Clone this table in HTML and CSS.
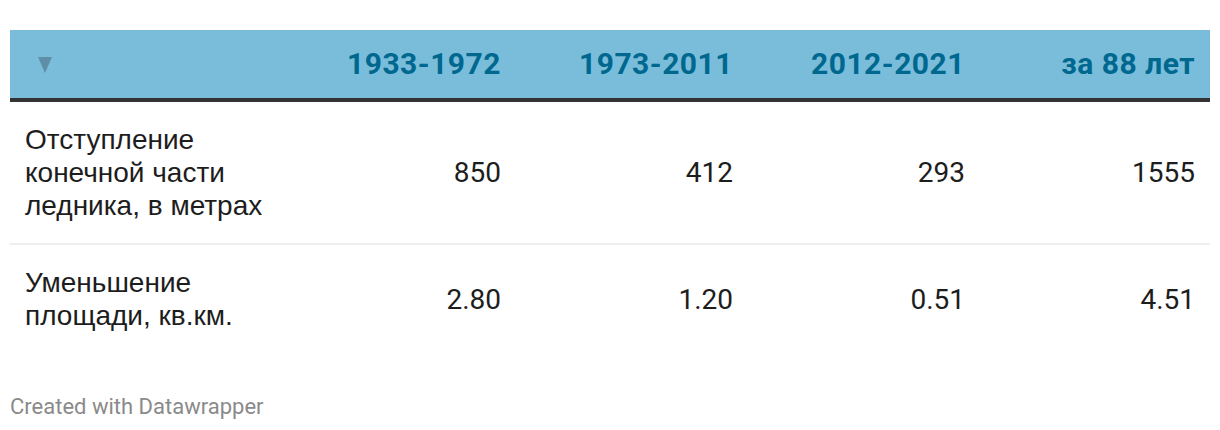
FILE: index.html
```html
<!DOCTYPE html>
<html lang="ru">
<head>
    <meta charset="UTF-8">
    <meta name="viewport" content="width=device-width, initial-scale=1.0">
    <title>Отступление ледника</title>
    <link rel="stylesheet" href="styles.css">
</head>
<body>
    <div class="chart">
        <table class="data-table">
            <thead>
                <tr>
                    <th class="label-col">
                        <svg class="sort-icon" width="14" height="16" viewBox="0 0 14 16">
                            <polygon points="0,0 14,0 7,16" fill="#5e8fa6"/>
                        </svg>
                    </th>
                    <th>1933-1972</th>
                    <th>1973-2011</th>
                    <th>2012-2021</th>
                    <th class="last-col">за 88 лет</th>
                </tr>
            </thead>
            <tbody>
                <tr>
                    <td class="label-col">Отступление конечной части ледника, в метрах</td>
                    <td>850</td>
                    <td>412</td>
                    <td>293</td>
                    <td class="last-col">1555</td>
                </tr>
                <tr class="divided">
                    <td class="label-col">Уменьшение площади, кв.км.</td>
                    <td>2.80</td>
                    <td>1.20</td>
                    <td>0.51</td>
                    <td class="last-col">4.51</td>
                </tr>
            </tbody>
        </table>
        <div class="footer">Created with Datawrapper</div>
    </div>
</body>
</html>
```

FILE: styles.css
```css
:root {
    --header-bg: #79bddb;
    --header-text: #00688e;
    --dark: #333333;
    --text: #1d1d1d;
    --rule: #eeeeee;
    --muted: #8a8a8a;
}

* {
    margin: 0;
    padding: 0;
    box-sizing: border-box;
}

body {
    background-color: white;
    font-family: Roboto, 'Liberation Sans', sans-serif;
    color: var(--text);
}

.chart {
    padding: 30px 10px 0 10px;
}

.data-table {
    width: 100%;
    border-collapse: separate;
    border-spacing: 0;
    table-layout: fixed;
}

.data-table th,
.data-table td {
    width: 232px;
    text-align: right;
    padding-right: 15px;
}

.data-table th.last-col,
.data-table td.last-col {
    width: 230px;
}

.data-table th.label-col,
.data-table td.label-col {
    width: auto;
    text-align: left;
    padding-left: 15px;
    padding-right: 10px;
}

.data-table th {
    background-color: var(--header-bg);
    border-bottom: 4px solid var(--dark);
    padding-top: 16px;
    padding-bottom: 16px;
    line-height: 36px;
    font-weight: 700;
    font-size: 30px;
    letter-spacing: 0.5px;
    color: var(--header-text);
    vertical-align: middle;
}

.data-table th.label-col {
    padding-left: 28px;
}

.sort-icon {
    display: block;
    margin-top: 2px;
}

.data-table td {
    font-size: 28px;
    line-height: 33px;
    padding-top: 21px;
    padding-bottom: 21px;
    vertical-align: middle;
}

.data-table td.label-col {
    font-family: 'Liberation Sans', Arial, sans-serif;
    font-size: 28px;
}

.data-table tr.divided td {
    border-top: 2px solid var(--rule);
}

.footer {
    margin-top: 41px;
    font-size: 22px;
    line-height: 26px;
    color: var(--muted);
}
```
